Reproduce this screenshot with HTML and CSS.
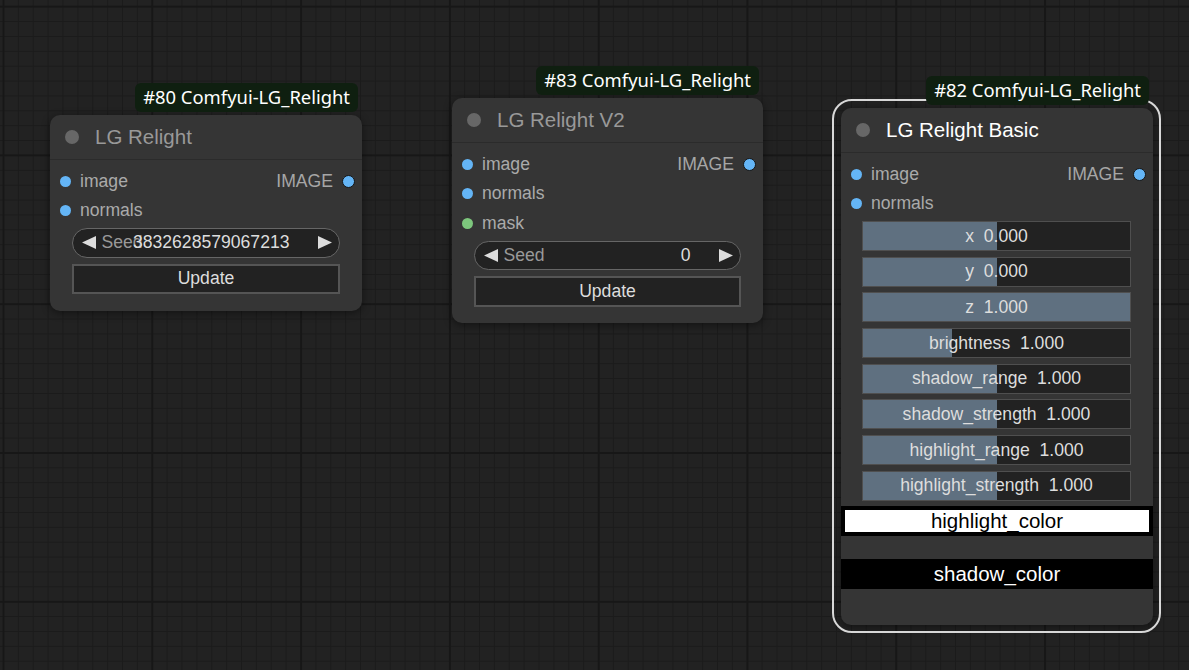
FILE: index.html
```html
<!DOCTYPE html>
<html>
<head>
<meta charset="utf-8">
<link rel="stylesheet" href="styles.css">
</head>
<body>
<div class="canvas">

  <div class="node n80">
    <div class="badge">#80 Comfyui-LG_Relight</div>
    <div class="title"><span class="tdot"></span><span>LG Relight</span></div>
    <div class="body">
      <div class="row"><span class="in"><i class="dot"></i>image</span><span class="out">IMAGE<i class="dot o"></i></span></div>
      <div class="row"><span class="in"><i class="dot"></i>normals</span></div>
      <div class="combo">
        <svg class="arr" width="14" height="13" viewBox="0 0 14 13"><polygon points="14,0 14,13 0,6.5" fill="#ddd"/></svg>
        <span class="clabel">Seed</span>
        <span class="cval">3832628579067213</span>
        <svg class="arr r" width="14" height="13" viewBox="0 0 14 13"><polygon points="0,0 0,13 14,6.5" fill="#ddd"/></svg>
      </div>
      <div class="button">Update</div>
    </div>
  </div>

  <div class="node n83">
    <div class="badge">#83 Comfyui-LG_Relight</div>
    <div class="title"><span class="tdot"></span><span>LG Relight V2</span></div>
    <div class="body">
      <div class="row"><span class="in"><i class="dot"></i>image</span><span class="out">IMAGE<i class="dot o"></i></span></div>
      <div class="row"><span class="in"><i class="dot"></i>normals</span></div>
      <div class="row"><span class="in"><i class="dot g"></i>mask</span></div>
      <div class="combo">
        <svg class="arr" width="14" height="13" viewBox="0 0 14 13"><polygon points="14,0 14,13 0,6.5" fill="#ddd"/></svg>
        <span class="clabel">Seed</span>
        <span class="cval">0</span>
        <svg class="arr r" width="14" height="13" viewBox="0 0 14 13"><polygon points="0,0 0,13 14,6.5" fill="#ddd"/></svg>
      </div>
      <div class="button">Update</div>
    </div>
  </div>

  <div class="node n82">
    <div class="sel"></div>
    <div class="badge">#82 Comfyui-LG_Relight</div>
    <div class="title active"><span class="tdot"></span><span>LG Relight Basic</span></div>
    <div class="body">
      <div class="row"><span class="in"><i class="dot"></i>image</span><span class="out">IMAGE<i class="dot o"></i></span></div>
      <div class="row"><span class="in"><i class="dot"></i>normals</span></div>
      <div class="slider first"><i class="fill" style="width:50%"></i><span class="stext">x  0.000</span></div>
      <div class="slider"><i class="fill" style="width:50%"></i><span class="stext">y  0.000</span></div>
      <div class="slider"><i class="fill" style="width:100%"></i><span class="stext">z  1.000</span></div>
      <div class="slider"><i class="fill" style="width:33.4%"></i><span class="stext">brightness  1.000</span></div>
      <div class="slider"><i class="fill" style="width:50%"></i><span class="stext">shadow_range  1.000</span></div>
      <div class="slider"><i class="fill" style="width:50%"></i><span class="stext">shadow_strength  1.000</span></div>
      <div class="slider"><i class="fill" style="width:50%"></i><span class="stext">highlight_range  1.000</span></div>
      <div class="slider"><i class="fill" style="width:50%"></i><span class="stext">highlight_strength  1.000</span></div>
      <div class="color-hl"><div class="color-hl-inner">highlight_color</div></div>
      <div class="band"></div>
      <div class="color-sh">shadow_color</div>
    </div>
  </div>

</div>
</body>
</html>
```
FILE: styles.css
```css
* { box-sizing: border-box; }
html, body { margin: 0; padding: 0; }
body {
  width: 1189px;
  height: 670px;
  overflow: hidden;
  font-family: "Liberation Sans", Arial, sans-serif;
  background-color: #222222;
  background-image:
    linear-gradient(90deg, #171717 0 2px, transparent 2px),
    linear-gradient(180deg, #171717 0 2px, transparent 2px),
    linear-gradient(90deg, #1b1b1b 0 1px, transparent 1px),
    linear-gradient(180deg, #1b1b1b 0 1px, transparent 1px);
  background-size: 148.8px 100%, 100% 148.8px, 14.88px 100%, 100% 14.88px;
  background-position: 2.5px 0, 0 5.6px, 3px 0, 0 6.2px;
}
.canvas { position: relative; width: 1189px; height: 670px; }

.node {
  position: absolute;
  background: #353535;
  border-radius: 10px;
  box-shadow: 0 2px 8px rgba(0, 0, 0, 0.45);
  display: flex;
  flex-direction: column;
}
.n80 { left: 50px; top: 115px; width: 312px; height: 196px; }
.n83 { left: 452px; top: 98px; width: 311px; height: 225px; }
.n82 { left: 841px; top: 108px; width: 312px; height: 517px; }

.badge {
  position: absolute;
  right: 4px;
  bottom: 100%;
  margin-bottom: 3.5px;
  height: 28.5px;
  line-height: 28.5px;
  padding: 0 8px;
  background: #0f1f10;
  border-radius: 6px;
  color: #ffffff;
  font-family: "Noto Sans", sans-serif;
  font-size: 18.4px;
  white-space: nowrap;
  z-index: 2;
}
.sel {
  position: absolute;
  top: -9px; left: -9px; right: -8px; bottom: -8px;
  border: 2px solid #d8d8d8;
  border-radius: 20px;
  z-index: 1;
}

.title {
  height: 45px;
  flex: none;
  display: flex;
  align-items: center;
  padding-left: 15px;
  gap: 16px;
  border-bottom: 1px solid #2b2b2b;
  font-size: 20.5px;
  color: #999999;
}
.title.active { color: #ffffff; }
.tdot {
  width: 14px; height: 14px;
  border-radius: 50%;
  background: #676767;
}

.body {
  flex: 1;
  display: flex;
  flex-direction: column;
  padding-top: 6.5px;
}
.row {
  height: 29.5px;
  flex: none;
  display: flex;
  align-items: center;
  justify-content: space-between;
  padding: 0 7.5px 0 9.5px;
  font-size: 17.6px;
  color: #aaaaaa;
}
.in, .out { display: flex; align-items: center; }
.in { gap: 9.5px; }
.out { gap: 8.5px; color: #a6a6a6; }
.dot {
  display: block;
  width: 11px; height: 11px;
  border-radius: 50%;
  background: #64b5f6;
}
.dot.o { width: 13px; height: 13px; border: 1.5px solid #151515; }
.dot.g { background: #7dc77d; }

.combo {
  margin: 2.5px 22px 0;
  height: 29.5px;
  flex: none;
  border: 1.5px solid #666666;
  border-radius: 15px;
  background: #222222;
  display: flex;
  align-items: center;
  padding: 0 7.5px 0 8.5px;
  font-size: 17.6px;
}
.arr { flex: none; display: block; }
.clabel {
  flex: 1 1 0;
  min-width: 0;
  white-space: nowrap;
  margin-left: 6px;
  color: #999999;
}
.cval {
  flex: none;
  white-space: nowrap;
  color: #dddddd;
  margin-right: 28px;
}

.button {
  margin: 6px 22px 0;
  height: 30.5px;
  flex: none;
  border: 2px solid #555555;
  background: #222222;
  color: #dddddd;
  display: flex;
  align-items: center;
  justify-content: center;
  font-size: 17.6px;
}

.slider {
  position: relative;
  margin: 5.7px 22px 0 21px;
  height: 30px;
  flex: none;
  border: 1.5px solid #4f4f4f;
  background: #222222;
  display: flex;
  align-items: center;
  justify-content: center;
  font-size: 17.6px;
  color: #dddddd;
  white-space: pre;
}
.slider.first { margin-top: 2.5px; }
.fill {
  position: absolute;
  left: 0; top: 0; bottom: 0;
  background: #5f7080;
}
.stext { position: relative; }

.color-hl {
  margin-top: 5px;
  height: 30px;
  flex: none;
  background: #000000;
  padding: 4px;
}
.color-hl-inner {
  height: 100%;
  background: #ffffff;
  color: #000000;
  font-size: 20.5px;
  display: flex;
  align-items: center;
  justify-content: center;
}
.band { height: 23.5px; flex: none; }
.color-sh {
  height: 29.5px;
  flex: none;
  background: #000000;
  color: #ffffff;
  font-size: 20.5px;
  display: flex;
  align-items: center;
  justify-content: center;
}
```
